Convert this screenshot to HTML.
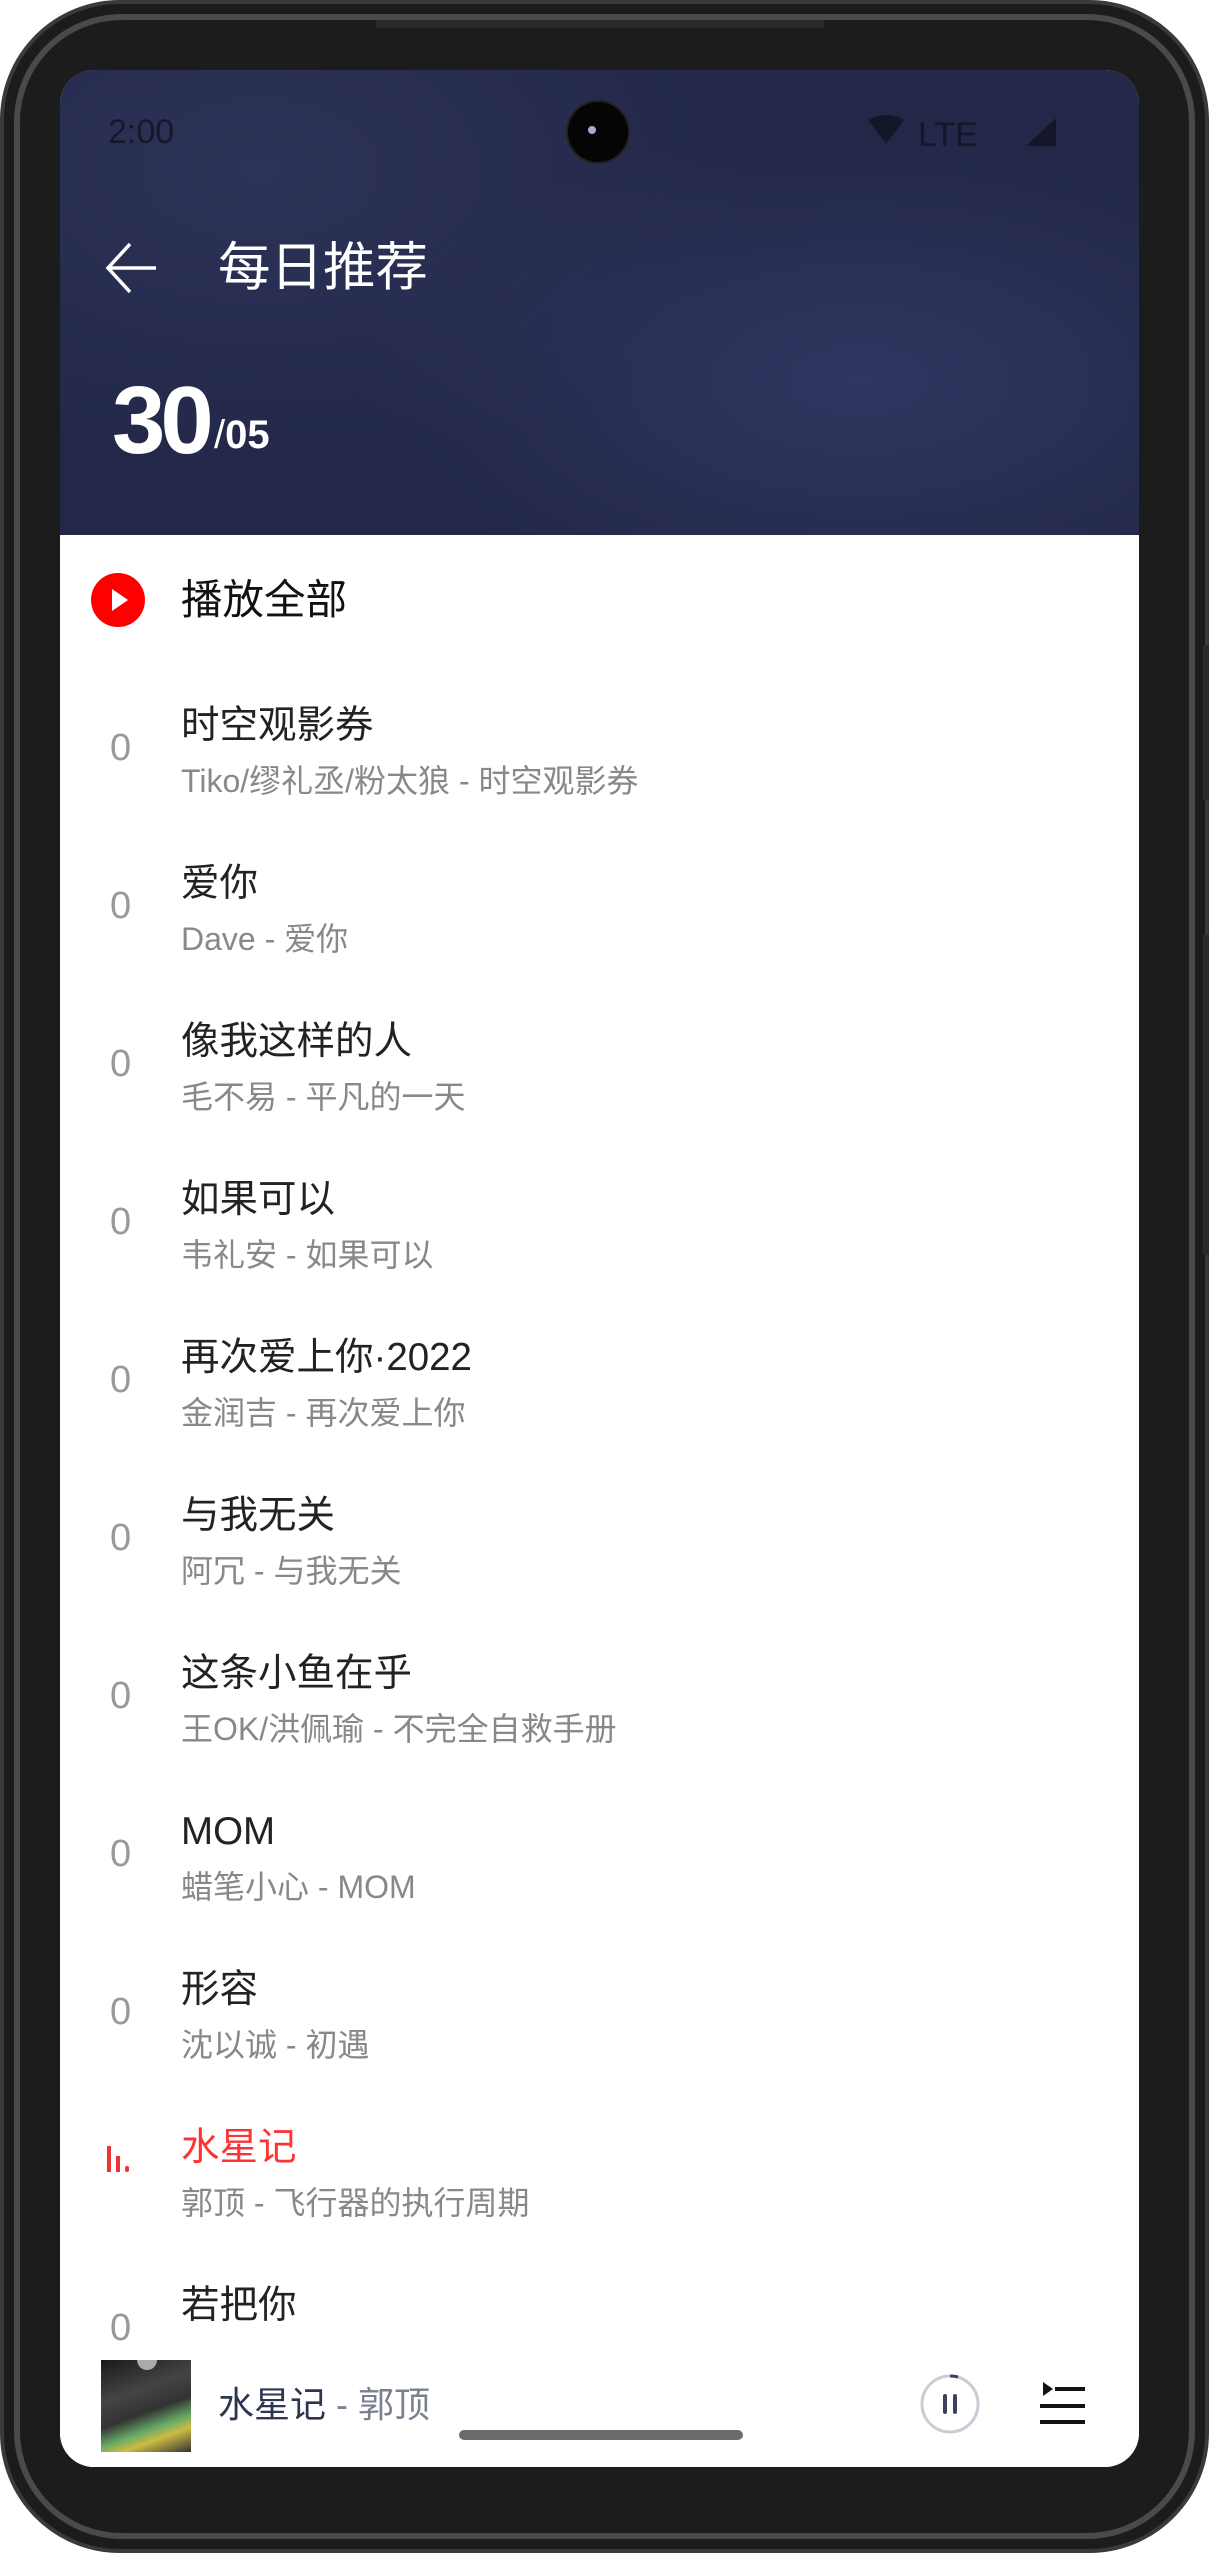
<!DOCTYPE html>
<html><head><meta charset="utf-8"><style>
*{margin:0;padding:0;box-sizing:border-box}
body{width:1209px;height:2553px;background:#fff;position:relative;overflow:hidden;font-family:"Liberation Sans","Noto Sans CJK SC",sans-serif}
.abs{position:absolute}
.phone{left:0;top:0;width:1209px;height:2553px;border-radius:120px;background:#1c1c1c;border:4px solid #3a3a3a}
.rim{left:14px;top:14px;width:1181px;height:2525px;border-radius:108px;border:6px solid #4a4a4a}
.screen{left:60px;top:70px;width:1079px;height:2397px;border-radius:34px;background:#fff;overflow:hidden}
.hdr{left:0;top:0;width:1079px;height:465px;background:radial-gradient(ellipse 500px 250px at 800px 310px,#2f3660,transparent),radial-gradient(ellipse 500px 300px at 200px 100px,#2d3358,transparent),#232849}
.t{font-size:38.5px;line-height:46px;color:#222;left:121px;white-space:nowrap}
.s{font-size:32px;line-height:36px;color:#888;left:121px;white-space:nowrap}
.n{font-size:38px;line-height:46px;color:#999;left:50px;width:20px;text-align:center}
</style></head><body>
<div class="abs phone"></div>
<div class="abs rim"></div>
<div class="abs" style="left:1203px;top:645px;width:6px;height:155px;background:#2a2a2a"></div>
<div class="abs" style="left:1203px;top:935px;width:6px;height:320px;background:#2a2a2a"></div>
<div class="abs" style="left:375px;top:20px;width:450px;height:8px;border-radius:4px;background:#2a2a2a"></div>
<div class="abs screen">
 <div class="abs hdr"></div>
 <div class="abs" style="left:48px;top:42px;font-size:34px;line-height:40px;color:#15182a">2:00</div>
 <div class="abs" style="left:506px;top:30px;width:64px;height:64px;border-radius:50%;background:#050505;border:2px solid #222"><div class="abs" style="left:20px;top:24px;width:8px;height:8px;border-radius:50%;background:#aac"></div></div>
 <svg class="abs" style="left:806px;top:44px" width="220" height="40"><path d="M2 6 Q20 -4 38 6 L20 30 Z" fill="#14172a"/><text x="52" y="32" font-size="34" fill="#14172a" font-family="Liberation Sans">LTE</text><path d="M160 32 L190 4 L190 32 Z" fill="#14172a"/></svg>
 <svg class="abs" style="left:44px;top:168px" width="60" height="60"><path d="M52 30 H6 M26 6 L4 30 L26 54" stroke="#fff" stroke-width="3.5" fill="none"/></svg>
 <div class="abs" style="left:158px;top:168px;font-size:52.5px;line-height:60px;color:#fff">每日推荐</div>
 <div class="abs" style="left:52px;top:296px;font-size:96px;line-height:110px;font-weight:bold;color:#fff;letter-spacing:-5px">30</div>
 <div class="abs" style="left:154px;top:340px;font-size:40px;line-height:50px;font-weight:bold;color:#fff"><span style="font-weight:normal">/</span>05</div>
 <div class="abs" style="left:31px;top:503px;width:54px;height:54px;border-radius:50%;background:#f00"><svg width="54" height="54"><path d="M21 16 L37 27 L21 38 Z" fill="#fff"/></svg></div>
 <div class="abs" style="left:121px;top:505px;font-size:41.5px;line-height:50px;color:#111">播放全部</div>

 <div class="abs t" style="top:633px">时空观影券</div><div class="abs s" style="top:693px">Tiko/缪礼丞/粉太狼 - 时空观影券</div><div class="abs n" style="top:655px">0</div>
 <div class="abs t" style="top:791px">爱你</div><div class="abs s" style="top:851px">Dave - 爱你</div><div class="abs n" style="top:813px">0</div>
 <div class="abs t" style="top:949px">像我这样的人</div><div class="abs s" style="top:1009px">毛不易 - 平凡的一天</div><div class="abs n" style="top:971px">0</div>
 <div class="abs t" style="top:1107px">如果可以</div><div class="abs s" style="top:1167px">韦礼安 - 如果可以</div><div class="abs n" style="top:1129px">0</div>
 <div class="abs t" style="top:1265px">再次爱上你·2022</div><div class="abs s" style="top:1325px">金润吉 - 再次爱上你</div><div class="abs n" style="top:1287px">0</div>
 <div class="abs t" style="top:1423px">与我无关</div><div class="abs s" style="top:1483px">阿冗 - 与我无关</div><div class="abs n" style="top:1445px">0</div>
 <div class="abs t" style="top:1581px">这条小鱼在乎</div><div class="abs s" style="top:1641px">王OK/洪佩瑜 - 不完全自救手册</div><div class="abs n" style="top:1603px">0</div>
 <div class="abs t" style="top:1739px">MOM</div><div class="abs s" style="top:1799px">蜡笔小心 - MOM</div><div class="abs n" style="top:1761px">0</div>
 <div class="abs t" style="top:1897px">形容</div><div class="abs s" style="top:1957px">沈以诚 - 初遇</div><div class="abs n" style="top:1919px">0</div>
 <div class="abs t" style="top:2055px;color:#f33">水星记</div><div class="abs s" style="top:2115px">郭顶 - 飞行器的执行周期</div>
 <svg class="abs" style="left:45px;top:2070px" width="40" height="40"><rect x="2" y="6" width="4" height="26" fill="#e33"/><rect x="11" y="16" width="4" height="16" fill="#e33"/><rect x="20" y="26" width="4" height="6" rx="2" fill="#e33"/></svg>
 <div style="position:absolute;left:0;top:2200px;width:1079px;height:145px;overflow:hidden"><div class="abs t" style="top:13px">若把你</div><div class="abs s" style="top:73px">Kirsty刘瑾睿 - 若把你</div><div class="abs n" style="top:35px">0</div></div>
 <div class="abs" style="left:0;top:2275px;width:1079px;height:122px;background:#fff"></div>
 <div class="abs" style="left:41px;top:2290px;width:90px;height:92px;background:linear-gradient(160deg,#1a1a1a 0%,#444 35%,#333 55%,#6a6 70%,#cb4 80%,#333 100%)"><div class="abs" style="left:36px;top:0;width:20px;height:10px;border-radius:0 0 10px 10px;background:#aaa"></div></div>
 <div class="abs" style="left:158px;top:2312px;font-size:36px;line-height:46px;color:#2e3550">水星记 <span style="color:#7a8090">- 郭顶</span></div>
 <svg class="abs" style="left:858px;top:2302px" width="64" height="64"><circle cx="32" cy="32" r="28" stroke="#c8ccd4" stroke-width="3" fill="none"/><path d="M32 4 A28 28 0 0 1 40 5" stroke="#3a4260" stroke-width="3" fill="none"/><rect x="25" y="22" width="4" height="20" rx="2" fill="#3a4260"/><rect x="35" y="22" width="4" height="20" rx="2" fill="#3a4260"/></svg>
 <svg class="abs" style="left:980px;top:2310px" width="52" height="50"><path d="M3 2 L13 9 L3 16 Z" fill="#111"/><rect x="15" y="7" width="30" height="4" fill="#111"/><rect x="0" y="24" width="45" height="4" fill="#111"/><rect x="0" y="40" width="45" height="4" fill="#111"/></svg>
 <div class="abs" style="left:399px;top:2360px;width:284px;height:10px;border-radius:5px;background:#6b6b6b"></div>
</div>
</body></html>
